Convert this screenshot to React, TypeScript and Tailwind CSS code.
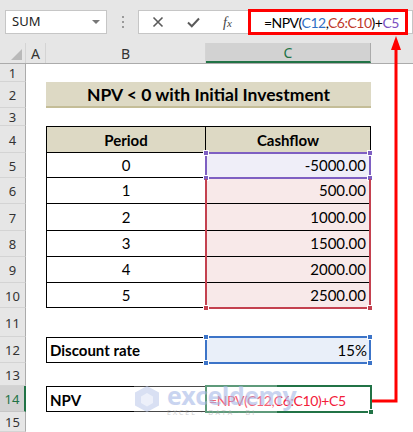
import React from "react";

const font = { fontFamily: "Lato, 'Liberation Sans', sans-serif" };

function RowHead({ n, h, active }: { n: number; h: string; active?: boolean }) {
  return (
    <div
      className={`${h} flex w-[26px] shrink-0 items-center justify-center border-b border-r pt-[3px] font-['Noto_Sans',sans-serif] text-[13px] ${
        active
          ? "border-b-[#c6c6c6] border-r-2 border-r-[#217346] bg-[#d2d2d2] text-[#217346]"
          : "border-b-[#d4d4d4] border-r-[#ababab] bg-[#e6e6e6] text-[#333]"
      }`}
    >
      {n}
    </div>
  );
}

function Row({
  n,
  h,
  b,
  c,
  span,
  bClass = "bg-white",
  cClass = "bg-white",
  active,
}: {
  n: number;
  h: string;
  b?: React.ReactNode;
  c?: React.ReactNode;
  span?: React.ReactNode;
  bClass?: string;
  cClass?: string;
  active?: boolean;
}) {
  return (
    <div className={`flex ${h}`}>
      <RowHead n={n} h={h} active={active} />
      <div className="w-[20px] shrink-0 bg-white" />
      {span ?? (
        <>
          <div className={`flex w-[160px] shrink-0 ${bClass}`}>{b}</div>
          <div className={`flex w-[165px] shrink-0 ${cClass}`}>{c}</div>
        </>
      )}
      <div className="flex-1 bg-white" />
    </div>
  );
}

function Handle({ cls }: { cls: string }) {
  return <div className={`absolute h-[6px] w-[6px] border border-white ${cls}`} />;
}

export default function App() {
  const body = "bg-white items-center justify-center text-[15px] text-black";
  const num = "items-center justify-end pr-[4px] text-[15px] text-black";
  const periods = [
    { p: "0", v: "-5000.00", h: "h-[25px]", fill: "bg-[#efeef8]" },
    { p: "1", v: "500.00", h: "h-[26px]", fill: "bg-[#f8e9e9]" },
    { p: "2", v: "1000.00", h: "h-[27px]", fill: "bg-[#f8e9e9]" },
    { p: "3", v: "1500.00", h: "h-[26px]", fill: "bg-[#f8e9e9]" },
    { p: "4", v: "2000.00", h: "h-[26px]", fill: "bg-[#f8e9e9]" },
    { p: "5", v: "2500.00", h: "h-[25px]", fill: "bg-[#f8e9e9]" },
  ];

  return (
    <div className="relative h-[432px] w-[413px] overflow-hidden bg-[#e6e6e6]" style={font}>
      {/* toolbar */}
      <div className="flex h-[43px] items-start pl-[5px] pt-[10px]">
        <div className="flex h-[24px] w-[102px] items-center justify-between border border-[#c6c6c6] bg-white pl-[6px] pr-[6px] font-['Noto_Sans',sans-serif] text-[13px] text-[#222]">
          <span>SUM</span>
          <span className="h-0 w-0 border-l-[4px] border-r-[4px] border-t-[4px] border-l-transparent border-r-transparent border-t-[#777]" />
        </div>
        <div className="flex h-[24px] w-[31px] flex-col items-center justify-center gap-[3px]">
          <span className="h-[2px] w-[2px] bg-[#9a9a9a]" />
          <span className="h-[2px] w-[2px] bg-[#9a9a9a]" />
          <span className="h-[2px] w-[2px] bg-[#9a9a9a]" />
        </div>
        <div className="flex h-[24px] flex-1 items-center border border-[#c6c6c6] bg-white">
          <div className="flex h-full w-[110px] shrink-0 items-center">
            <svg className="ml-[13px]" width="12" height="12" viewBox="0 0 12 12">
              <path d="M1.5 1.5 L10.5 10.5 M10.5 1.5 L1.5 10.5" stroke="#5a5a5a" strokeWidth="1.6" />
            </svg>
            <svg className="ml-[23px]" width="13" height="11" viewBox="0 0 13 11">
              <path d="M1 5.5 L4.8 9.2 L12 1.5" stroke="#5a5a5a" strokeWidth="2" fill="none" />
            </svg>
            <span className="ml-[23px] font-['Liberation_Serif',serif] text-[14px] italic text-[#444]">
              f<span className="text-[11px]">x</span>
            </span>
          </div>
          <div className="whitespace-nowrap pl-[15px] text-[14px] tracking-[-0.5px] text-black">
            =NPV(<span className="text-[#2f6fc4]">C12</span>,<span className="text-[#c0392b]">C6:C10</span>)+
            <span className="text-[#7a4fc0]">C5</span>
          </div>
        </div>
      </div>

      {/* column headers */}
      <div className="flex h-[21px] border-b border-[#ababab] font-['Noto_Sans',sans-serif] text-[14px] text-[#333]">
        <div className="relative w-[26px] shrink-0 border-r border-[#d4d4d4]">
          <div className="absolute bottom-[3px] right-[3px] h-0 w-0 border-b-[11px] border-l-[11px] border-b-[#b9b9b9] border-l-transparent" />
        </div>
        <div className="flex w-[20px] shrink-0 items-center justify-center border-r border-[#d4d4d4]">A</div>
        <div className="flex w-[160px] shrink-0 items-center justify-center border-r border-[#d4d4d4]">B</div>
        <div className="flex w-[165px] shrink-0 items-center justify-center border-b-2 border-r border-b-[#217346] border-r-[#ababab] bg-[#d2d2d2] text-[#217346]">
          C
        </div>
        <div className="flex-1" />
      </div>

      {/* sheet rows */}
      <Row n={1} h="h-[18px]" />
      <Row
        n={2}
        h="h-[26px]"
        span={
          <div className="flex h-full w-[325px] shrink-0 items-center justify-center border-b-2 border-[#c4bd97] bg-[#ddd9c4] pt-[2px] text-[17.5px] font-bold text-black">
            NPV &lt; 0 with Initial Investment
          </div>
        }
      />
      <Row n={3} h="h-[18px]" />
      <Row
        n={4}
        h="h-[27px]"
        b="Period"
        c="Cashflow"
        bClass="items-center justify-center border border-black bg-[#ddd9c4] pt-[2px] text-[15px] font-bold"
        cClass="items-center justify-center border-y border-r border-black bg-[#ddd9c4] pt-[2px] text-[15px] font-bold"
      />
      {periods.map((r, i) => (
        <Row
          key={r.p}
          n={5 + i}
          h={r.h}
          b={r.p}
          c={r.v}
          bClass={`${body} border-x border-b border-black`}
          cClass={`${num} ${r.fill} border-b border-r border-black`}
        />
      ))}
      <Row n={11} h="h-[29px]" />
      <Row
        n={12}
        h="h-[26px]"
        b="Discount rate"
        c="15%"
        bClass="items-center border border-black bg-white pl-[3px] text-[15px] font-bold"
        cClass={`${num} bg-[#e9eff9]`}
      />
      <Row n={13} h="h-[23px]" />
      <Row
        n={14}
        h="h-[26px]"
        active
        b="NPV"
        c="=NPV(C12,C6:C10)+C5"
        bClass="items-center border border-black bg-white pl-[3px] pt-[2px] text-[15px] font-bold"
        cClass="items-center whitespace-nowrap bg-white pl-[3px] pt-[3px] text-[14px] tracking-[-0.4px] text-[#f2203a]"
      />
      <Row n={15} h="h-[20px]" />

      {/* range finder boxes */}
      <div className="pointer-events-none absolute left-[205px] top-[152px] h-[27px] w-[166px] border-2 border-[#7e5fc2]">
        <Handle cls="-left-[4px] -top-[4px] bg-[#7e5fc2]" />
        <Handle cls="-right-[4px] -top-[4px] bg-[#7e5fc2]" />
        <Handle cls="-bottom-[4px] -left-[4px] bg-[#7e5fc2]" />
        <Handle cls="-bottom-[4px] -right-[4px] bg-[#7e5fc2]" />
      </div>
      <div className="pointer-events-none absolute left-[205px] top-[179px] h-[130px] w-[166px] border-x-2 border-b-2 border-[#c4414f]">
        <Handle cls="-bottom-[4px] -left-[4px] bg-[#c4414f]" />
        <Handle cls="-bottom-[4px] -right-[4px] bg-[#c4414f]" />
      </div>
      <div className="pointer-events-none absolute left-[205px] top-[336px] h-[28px] w-[166px] border-2 border-[#3c74c8]">
        <Handle cls="-left-[4px] -top-[4px] bg-[#3c74c8]" />
        <Handle cls="-right-[4px] -top-[4px] bg-[#3c74c8]" />
        <Handle cls="-bottom-[4px] -left-[4px] bg-[#3c74c8]" />
        <Handle cls="-bottom-[4px] -right-[4px] bg-[#3c74c8]" />
      </div>
      <div className="pointer-events-none absolute left-[205px] top-[385px] h-[28px] w-[167px] border-2 border-[#217346]">
        <div className="absolute -bottom-[4px] -right-[4px] h-[6px] w-[6px] border border-white bg-[#217346]" />
      </div>

      {/* watermark */}
      <div className="pointer-events-none absolute left-[134px] top-[383px] flex h-[36px] w-[143px] items-start bg-white/40 opacity-70">
        <svg className="mt-[2px] shrink-0" width="26" height="28" viewBox="0 0 26 28">
          <path d="M13 1 L25 7.5 L25 20.5 L13 27 L1 20.5 L1 7.5 Z" fill="#c9d4ef" />
          <path d="M13 8 L19 11.5 L19 18 L13 21.5 L7 18 L7 11.5 Z" fill="#e6ebf8" />
        </svg>
        <div className="ml-[7px] flex flex-col leading-none">
          <span className="font-['Open_Sans',sans-serif] text-[25px] font-bold tracking-[-0.5px] text-[#b3c3ea]">exceldemy</span>
          <span className="mt-[1px] whitespace-nowrap font-['Open_Sans',sans-serif] text-[7px] tracking-[2px] text-[#b8b8b8]">EXCEL · DATA · BI</span>
        </div>
      </div>

      {/* annotation */}
      <div className="pointer-events-none absolute left-[248px] top-[9px] h-[26px] w-[160px] border-[3px] border-[#ff0000]" />
      <svg className="pointer-events-none absolute left-0 top-0" width="413" height="432">
        <path d="M396 48 L396 401 L372 401" stroke="#ff0000" strokeWidth="3" fill="none" />
        <path d="M396 36 L401 50 L391 50 Z" fill="#ff0000" />
      </svg>
    </div>
  );
}
